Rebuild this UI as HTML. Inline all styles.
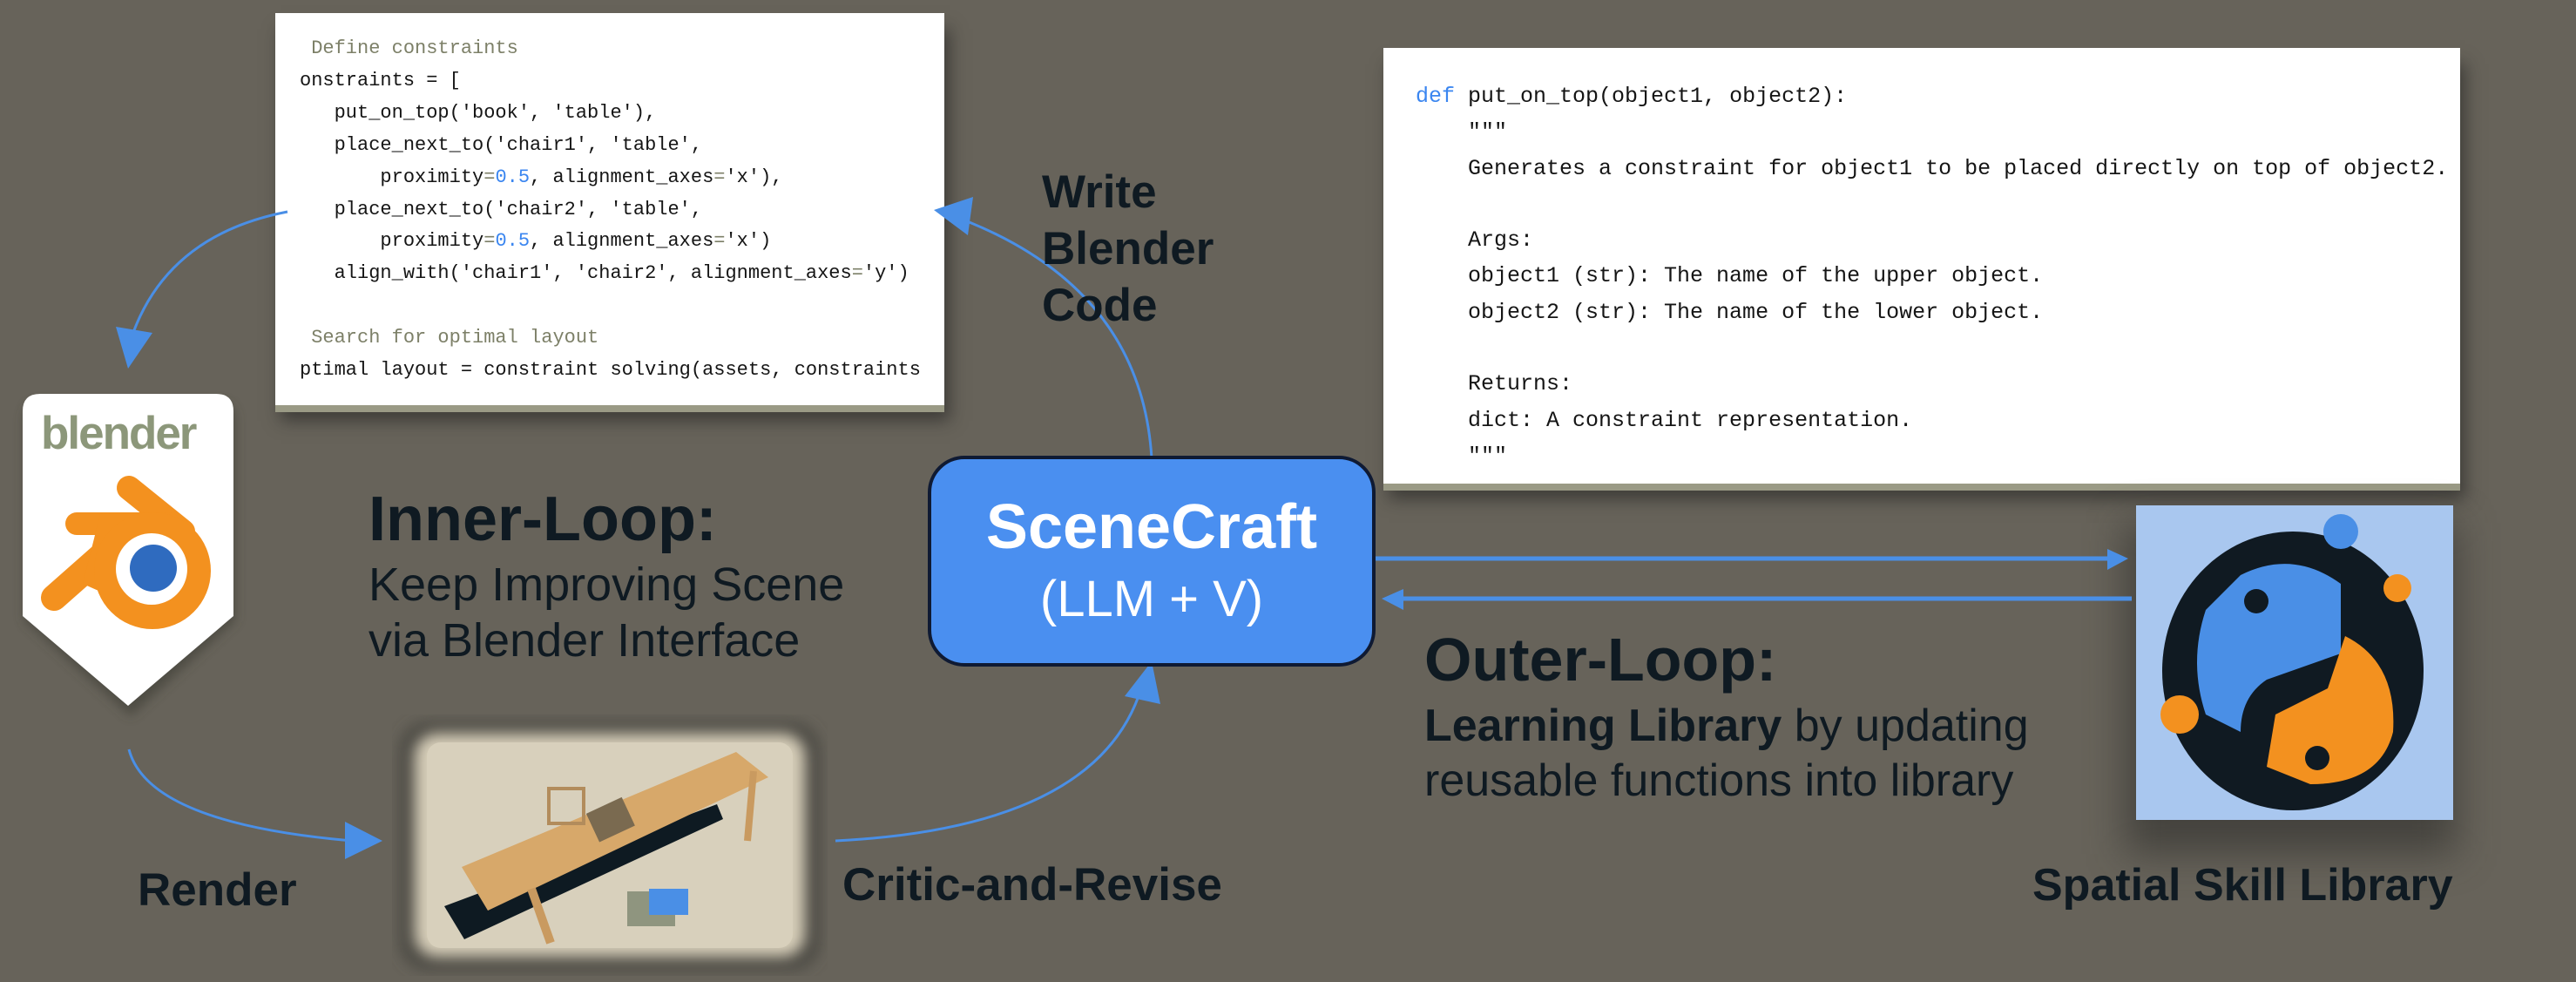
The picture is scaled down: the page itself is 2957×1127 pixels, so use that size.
<!DOCTYPE html>
<html><head><meta charset="utf-8"><style>
html,body{margin:0;padding:0}
body{width:2957px;height:1127px;background:#67635a;position:relative;overflow:hidden;font-family:"Liberation Sans",Arial,sans-serif;color:#0f1a22}
.t{position:absolute;white-space:nowrap;line-height:1}
.b{font-weight:bold}
pre{margin:0;font-family:"Liberation Mono","DejaVu Sans Mono",monospace;color:#151515;position:absolute;white-space:pre}
.c{color:#7d8068}.n{color:#3b86f0}.k{color:#3b86f0}
.box{position:absolute;background:#fff;box-shadow:0 8px 0 #9a9a85,6px 18px 18px rgba(30,30,30,.55)}
</style></head><body>

<div class="box" style="left:316px;top:15px;width:768px;height:450px;">
<div style="position:absolute;left:0;top:0;width:744px;height:450px;overflow:hidden">
<pre style="left:28px;top:23px;font-size:22px;line-height:36.9px"><span class="c"> Define constraints</span>
onstraints = [
   put_on_top('book', 'table'),
   place_next_to('chair1', 'table',
       proximity<span class="c">=</span><span class="n">0.5</span>, alignment_axes<span class="c">=</span>'x'),
   place_next_to('chair2', 'table',
       proximity<span class="c">=</span><span class="n">0.5</span>, alignment_axes<span class="c">=</span>'x')
   align_with('chair1', 'chair2', alignment_axes<span class="c">=</span>'y')

<span class="c"> Search for optimal layout</span>
ptimal layout = constraint solving(assets, constraints)</pre>
</div></div>

<div class="box" style="left:1588px;top:55px;width:1236px;height:500px;overflow:hidden">
<pre style="left:37px;top:35px;font-size:25px;line-height:41.3px"><span class="k">def</span> put_on_top(object1, object2):
    """
    Generates a constraint for object1 to be placed directly on top of object2.

    Args:
    object1 (str): The name of the upper object.
    object2 (str): The name of the lower object.

    Returns:
    dict: A constraint representation.
    """</pre>
</div>

<!-- blender shield -->
<svg style="position:absolute;left:0;top:0" width="320" height="860">
<defs><filter id="sh"><feGaussianBlur stdDeviation="6"/></filter></defs>
<path d="M48 462 H250 Q270 462 270 482 V712 L150 822 L28 712 V482 Q28 462 48 462Z" fill="#3e3c36" opacity=".6" filter="url(#sh)"/>
<path d="M46 452 H248 Q268 452 268 472 V707 L147 810 L26 707 V472 Q26 452 46 452Z" fill="#fff"/>
<text x="47" y="515" font-family="Liberation Sans,Arial,sans-serif" font-weight="bold" font-size="53" fill="#8c977a" letter-spacing="-2">blender</text>
<g stroke="#f3911f" stroke-linecap="round" fill="none">
<line x1="148" y1="560" x2="210" y2="610" stroke-width="28"/>
<line x1="88" y1="601" x2="165" y2="601" stroke-width="26"/>
<line x1="62" y1="686" x2="130" y2="626" stroke-width="30"/>
</g>
<polygon points="115,590 200,588 235,640 140,690 95,670" fill="#f3911f"/>
<circle cx="175" cy="655" r="67" fill="#f3911f"/>
<circle cx="174" cy="653" r="41" fill="#fff"/>
<circle cx="176" cy="652" r="27" fill="#2f6bbf"/>
</svg>

<!-- render image -->
<svg style="position:absolute;left:450px;top:820px" width="500" height="300">
<defs><filter id="bl"><feGaussianBlur stdDeviation="8"/></filter></defs>
<rect x="8" y="8" width="484" height="286" rx="34" fill="#4e4b45" filter="url(#bl)"/>
<rect x="26" y="22" width="448" height="256" rx="26" fill="#d6cdb8" filter="url(#bl)"/>
<rect x="40" y="32" width="420" height="236" rx="16" fill="#d8d0bc"/>
<polygon points="60,220 373,103 380,120 83,258" fill="#0e1a22"/>
<polygon points="80,175 395,43 432,72 110,225" fill="#d7a86a"/>
<line x1="160" y1="200" x2="182" y2="262" stroke="#c99a60" stroke-width="10"/>
<line x1="415" y1="65" x2="408" y2="145" stroke="#c99a60" stroke-width="8"/>
<rect x="228" y="103" width="45" height="36" fill="#7a6a50" transform="rotate(-25 250 120)"/>
<rect x="180" y="85" width="40" height="40" fill="none" stroke="#b28c5c" stroke-width="4"/>
<rect x="270" y="203" width="55" height="40" fill="#8f957f"/>
<rect x="295" y="200" width="45" height="30" fill="#4a8fe6"/>
</svg>

<!-- python image -->
<div style="position:absolute;left:2440px;top:600px;width:380px;height:380px;background:rgba(40,40,38,.55);filter:blur(22px)"></div>
<svg style="position:absolute;left:2452px;top:580px" width="364" height="361">
<rect width="364" height="361" fill="#a9c7ef"/>
<ellipse cx="180" cy="190" rx="150" ry="160" fill="#101a22"/>
<path d="M120 80 Q180 50 235 90 L235 170 L150 200 Q120 220 120 260 L80 240 Q60 180 80 120Z" fill="#4a8fe6"/>
<path d="M240 150 Q300 180 295 260 Q280 320 200 320 L150 300 L160 240 L220 210Z" fill="#f3911f"/>
<circle cx="138" cy="110" r="14" fill="#101a22"/>
<circle cx="208" cy="290" r="14" fill="#101a22"/>
<circle cx="50" cy="240" r="22" fill="#f3911f"/>
<circle cx="300" cy="95" r="16" fill="#f3911f"/>
<circle cx="235" cy="30" r="20" fill="#4a8fe6"/>
</svg>

<!-- arrows -->
<svg style="position:absolute;left:0;top:0" width="2957" height="1127">
<g fill="none" stroke="#4a8fe6" stroke-width="3">
<path d="M330 243 Q190 270 150 390"/>
<path d="M148 860 Q170 945 405 965"/>
<path d="M959 965 Q1260 950 1310 790"/>
<path d="M1322 526 Q1310 330 1100 250"/>
<line x1="1579" y1="641" x2="2425" y2="641" stroke-width="5"/>
<line x1="1605" y1="687" x2="2447" y2="687" stroke-width="5"/>
</g>
<g fill="#4a8fe6">
<polygon points="147,423 133,375 175,382"/>
<polygon points="439,965 396,943 396,986"/>
<polygon points="1322,759 1291,799 1332,808"/>
<polygon points="1072,241 1117,226 1111,270"/>
<polygon points="2443,641 2419,630 2419,654"/>
<polygon points="1586,687 1611,676 1611,700"/>
</g>
</svg>

<!-- SceneCraft box -->
<div style="position:absolute;left:1065px;top:523px;width:506px;height:234px;background:#4a8ff0;border:4px solid #0f1a33;border-radius:42px"></div>
<div class="t b" style="left:1065px;width:514px;text-align:center;top:569px;font-size:72px;color:#fff">SceneCraft</div>
<div class="t" style="left:1065px;width:514px;text-align:center;top:659px;font-size:58px;color:#fff">(LLM + V)</div>

<div class="t b" style="left:1196px;top:194px;font-size:53px">Write</div>
<div class="t b" style="left:1196px;top:259px;font-size:53px">Blender</div>
<div class="t b" style="left:1196px;top:324px;font-size:53px">Code</div>

<div class="t b" style="left:423px;top:560px;font-size:72px">Inner-Loop:</div>
<div class="t" style="left:423px;top:644px;font-size:54px">Keep Improving Scene</div>
<div class="t" style="left:423px;top:708px;font-size:54px">via Blender Interface</div>

<div class="t b" style="left:158px;top:995px;font-size:53px">Render</div>
<div class="t b" style="left:967px;top:989px;font-size:53px">Critic-and-Revise</div>

<div class="t b" style="left:1635px;top:722px;font-size:70px">Outer-Loop:</div>
<div class="t" style="left:1635px;top:807px;font-size:52px"><b>Learning Library</b> by updating</div>
<div class="t" style="left:1635px;top:870px;font-size:52px">reusable functions into library</div>

<div class="t b" style="left:2333px;top:990px;font-size:52px">Spatial Skill Library</div>
</body></html>
